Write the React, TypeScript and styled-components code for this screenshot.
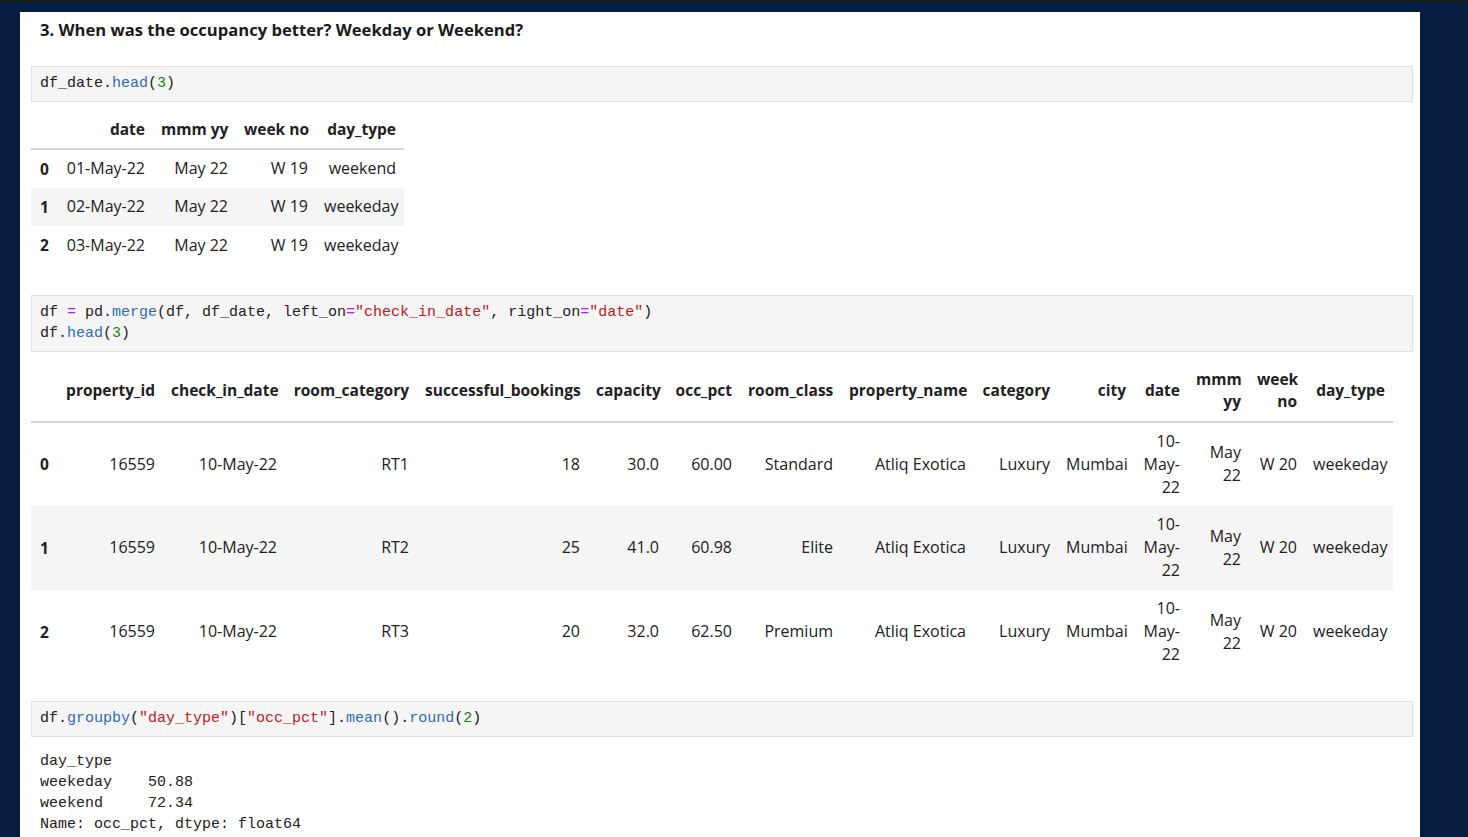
import React from 'react';
import styled, { createGlobalStyle } from 'styled-components';

const GlobalStyle = createGlobalStyle`
  body {
    margin: 0;
    background: #051d40;
    font-family: "Open Sans", "Noto Sans", sans-serif;
    color: #212121;
  }
`;

const TopStrip = styled.div`
  height: 2px;
  background: #1c1c1c;
`;

const Page = styled.div`
  padding: 10px 0 0 20px;
  height: 825px;
  overflow: hidden;
`;

const Panel = styled.div`
  width: 1400px;
  min-height: 900px;
  background: #fff;
  padding: 8px 7px 0 11px;
  box-sizing: border-box;
`;

const Heading = styled.h3`
  margin: 0 0 26px 9px;
  font-size: 16.6px;
  line-height: 20px;
  font-weight: 700;
  color: #1a1a1a;
`;

const Cell = styled.pre<{ $gap?: number }>`
  margin: ${(p) => p.$gap ?? 0}px 0 0;
  padding: 6px 8px 7px;
  background: #f5f5f5;
  border: 1px solid #e0e0e0;
  font-family: "Liberation Mono", "DejaVu Sans Mono", monospace;
  font-size: 15px;
  line-height: 21px;
  color: #212121;
`;

const Prop = styled.span`
  color: #2e6db4;
`;
const Num = styled.span`
  color: #118811;
`;
const Str = styled.span`
  color: #ba2121;
`;
const Op = styled.span`
  color: #aa22ff;
`;

const Frame = styled.table<{ $width: number }>`
  margin-top: 8px;
  width: ${(p) => p.$width}px;
  table-layout: fixed;
  border-collapse: collapse;
  font-size: 16px;
  color: #212121;
`;

const HeadRow = styled.tr<{ $height: number }>`
  height: ${(p) => p.$height}px;
  border-bottom: 2px solid #d4d4d4;
`;

const BodyRow = styled.tr<{ $height: number; $striped: boolean }>`
  height: ${(p) => p.$height}px;
  background: ${(p) => (p.$striped ? '#f5f5f5' : 'transparent')};
`;

const Th = styled.th`
  padding: 0 8px;
  text-align: right;
  vertical-align: middle;
  font-size: 15.5px;
  font-weight: 700;
  line-height: 22px;
  white-space: pre;
`;

const IndexTh = styled.th`
  padding: 0 0 0 9px;
  text-align: left;
  vertical-align: middle;
  font-size: 15.5px;
  font-weight: 700;
`;

const Td = styled.td`
  padding: 0 8px;
  text-align: right;
  vertical-align: middle;
  line-height: 23px;
  white-space: pre;
`;

const Output = styled.pre`
  margin: 14px 0 0 9px;
  font-family: "Liberation Mono", "DejaVu Sans Mono", monospace;
  font-size: 15px;
  line-height: 21px;
  color: #212121;
`;

type TableSpec = {
  widths: number[];
  headers: string[];
  rows: string[][];
  headHeight: number;
  rowHeight: number;
};

const dateTable: TableSpec = {
  widths: [27, 95, 83, 80, 88],
  headers: ['date', 'mmm yy', 'week no', 'day_type'],
  rows: [
    ['01-May-22', 'May 22', 'W 19', 'weekend'],
    ['02-May-22', 'May 22', 'W 19', 'weekeday'],
    ['03-May-22', 'May 22', 'W 19', 'weekeday'],
  ],
  headHeight: 39,
  rowHeight: 38.5,
};

const mergedRow = (room: string, booked: string, cap: string, pct: string, cls: string) => [
  '16559',
  '10-May-22',
  room,
  booked,
  cap,
  pct,
  cls,
  'Atliq Exotica',
  'Luxury',
  'Mumbai',
  '10-\nMay-\n22',
  'May\n22',
  'W 20',
  'weekeday',
];

const mergedTable: TableSpec = {
  widths: [27, 105, 122, 132, 171, 79, 73, 101, 133, 84, 76, 54, 61, 56, 88],
  headers: [
    'property_id',
    'check_in_date',
    'room_category',
    'successful_bookings',
    'capacity',
    'occ_pct',
    'room_class',
    'property_name',
    'category',
    'city',
    'date',
    'mmm\nyy',
    'week\nno',
    'day_type',
  ],
  rows: [
    mergedRow('RT1', '18', '30.0', '60.00', 'Standard'),
    mergedRow('RT2', '25', '41.0', '60.98', 'Elite'),
    mergedRow('RT3', '20', '32.0', '62.50', 'Premium'),
  ],
  headHeight: 62,
  rowHeight: 84,
};

const DataFrame = ({ spec }: { spec: TableSpec }) => {
  const total = spec.widths.reduce((a, b) => a + b, 0);
  return (
    <Frame $width={total}>
      <colgroup>
        {spec.widths.map((w, i) => (
          <col key={i} style={{ width: w }} />
        ))}
      </colgroup>
      <thead>
        <HeadRow $height={spec.headHeight}>
          <Th />
          {spec.headers.map((h) => (
            <Th key={h}>{h}</Th>
          ))}
        </HeadRow>
      </thead>
      <tbody>
        {spec.rows.map((row, i) => (
          <BodyRow key={i} $height={spec.rowHeight} $striped={i % 2 === 1}>
            <IndexTh>{i}</IndexTh>
            {row.map((v, j) => (
              <Td key={j}>{v}</Td>
            ))}
          </BodyRow>
        ))}
      </tbody>
    </Frame>
  );
};

export default function App() {
  return (
    <>
      <GlobalStyle />
      <TopStrip />
      <Page>
        <Panel>
          <Heading>3. When was the occupancy better? Weekday or Weekend?</Heading>

          <Cell>
            df_date.<Prop>head</Prop>(<Num>3</Num>)
          </Cell>
          <DataFrame spec={dateTable} />

          <Cell $gap={30}>
            df <Op>=</Op> pd.<Prop>merge</Prop>(df, df_date, left_on<Op>=</Op>
            <Str>"check_in_date"</Str>, right_on<Op>=</Op>
            <Str>"date"</Str>){'\n'}df.<Prop>head</Prop>(<Num>3</Num>)
          </Cell>
          <DataFrame spec={mergedTable} />

          <Cell $gap={27}>
            df.<Prop>groupby</Prop>(<Str>"day_type"</Str>)[<Str>"occ_pct"</Str>].<Prop>mean</Prop>().
            <Prop>round</Prop>(<Num>2</Num>)
          </Cell>
          <Output>
            {'day_type\nweekeday    50.88\nweekend     72.34\nName: occ_pct, dtype: float64'}
          </Output>
        </Panel>
      </Page>
    </>
  );
}
